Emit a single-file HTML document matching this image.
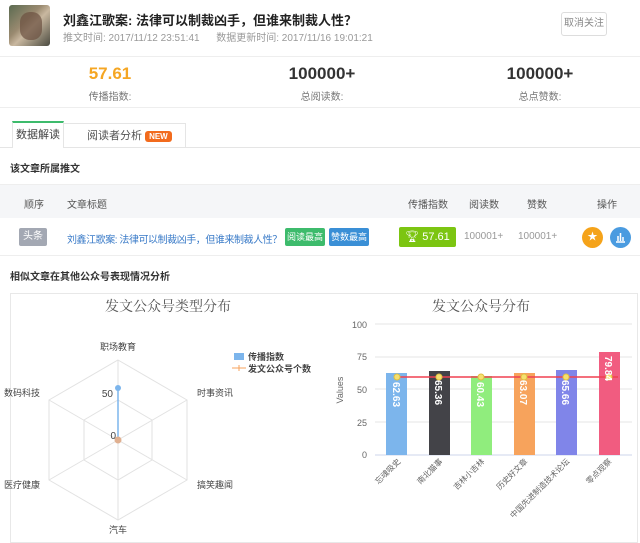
<!DOCTYPE html>
<html><head><meta charset="utf-8"><style>
*{margin:0;padding:0;box-sizing:border-box}
body{width:640px;height:538px;overflow:hidden;background:#fff;font-family:"Liberation Sans","Noto Sans CJK SC",sans-serif;color:#333;position:relative}
.a{position:absolute;white-space:nowrap}
</style></head><body>
<div class="a" style="left:9px;top:5px;width:41px;height:41px;border-radius:3px;background:linear-gradient(135deg,#5a6a50,#9a8a70 40%,#c9b8a0 55%,#4a4a40);"></div>
<div class="a" style="left:20px;top:12px;width:22px;height:28px;border-radius:10px;background:#6b5040;opacity:.7"></div>
<div class="a" style="left:63px;top:10px;font-size:13px;font-weight:bold;color:#222">刘鑫江歌案: 法律可以制裁凶手，但谁来制裁人性？</div>
<div class="a" style="left:63px;top:29px;font-size:10px;color:#999">推文时间: 2017/11/12 23:51:41 &nbsp;&nbsp;&nbsp;&nbsp;&nbsp;数据更新时间: 2017/11/16 19:01:21</div>
<div class="a" style="left:561px;top:12px;width:46px;height:24px;border:1px solid #ddd;border-radius:3px;font-size:10px;color:#888;text-align:center;line-height:22px">取消关注</div>
<div class="a" style="left:0;top:56px;width:640px;height:1px;background:#eee"></div>
<div class="a" style="left:60px;top:64px;width:100px;text-align:center;font-size:17px;font-weight:bold;color:#f5a623">57.61</div>
<div class="a" style="left:60px;top:88px;width:100px;text-align:center;font-size:10px;color:#777">传播指数:</div>
<div class="a" style="left:272px;top:64px;width:100px;text-align:center;font-size:17px;font-weight:bold;color:#333">100000+</div>
<div class="a" style="left:272px;top:88px;width:100px;text-align:center;font-size:10px;color:#777">总阅读数:</div>
<div class="a" style="left:490px;top:64px;width:100px;text-align:center;font-size:17px;font-weight:bold;color:#333">100000+</div>
<div class="a" style="left:490px;top:88px;width:100px;text-align:center;font-size:10px;color:#777">总点赞数:</div>
<div class="a" style="left:0;top:107px;width:640px;height:1px;background:#eee"></div>
<div class="a" style="left:12px;top:121px;width:52px;height:27px;border:1px solid #e5e5e5;border-top:2px solid #3dbb6c;border-bottom:none;background:#fff;font-size:11px;color:#444;text-align:center;line-height:25px;z-index:2">数据解读</div>
<div class="a" style="left:63px;top:123px;width:123px;height:24px;border:1px solid #e5e5e5;border-bottom:none;font-size:11px;color:#555;line-height:24px;padding-left:23px">阅读者分析 <span style="background:#f26b1d;color:#fff;font-size:8px;font-weight:bold;padding:1px 4px;border-radius:3px">NEW</span></div>
<div class="a" style="left:0;top:147px;width:640px;height:1px;background:#e5e5e5"></div>
<div class="a" style="left:10px;top:160px;font-size:10px;font-weight:bold;color:#333">该文章所属推文</div>
<div class="a" style="left:0;top:184px;width:640px;height:34px;background:#f5f6f8;border-top:1px solid #eee"></div>
<div class="a" style="left:24px;top:196px;font-size:10px;color:#555">顺序</div>
<div class="a" style="left:67px;top:196px;font-size:10px;color:#555">文章标题</div>
<div class="a" style="left:408px;top:196px;font-size:10px;color:#555">传播指数</div>
<div class="a" style="left:469px;top:196px;font-size:10px;color:#555">阅读数</div>
<div class="a" style="left:527px;top:196px;font-size:10px;color:#555">赞数</div>
<div class="a" style="left:597px;top:196px;font-size:10px;color:#555">操作</div>
<div class="a" style="left:19px;top:228px;width:28px;height:18px;background:#a3a8b3;border-radius:2px;color:#fff;font-size:10px;text-align:center;line-height:18px">头条</div>
<div class="a" style="left:67px;top:231px;font-size:10px;letter-spacing:-0.45px;color:#3a7bc8">刘鑫江歌案: 法律可以制裁凶手，但谁来制裁人性？</div>
<div class="a" style="left:285px;top:228px;width:40px;height:18px;background:#3dbb6c;border-radius:2px;color:#fff;font-size:9px;text-align:center;line-height:18px">阅读最高</div>
<div class="a" style="left:329px;top:228px;width:40px;height:18px;background:#3a8fd6;border-radius:2px;color:#fff;font-size:9px;text-align:center;line-height:18px">赞数最高</div>
<div class="a" style="left:399px;top:227px;width:57px;height:20px;background:#7cc511;border-radius:2px;color:#fff;font-size:11px;text-align:center;line-height:20px">🏆︎ 57.61</div>
<div class="a" style="left:464px;top:231px;font-size:10px;color:#999">100001+</div>
<div class="a" style="left:518px;top:231px;font-size:10px;color:#999">100001+</div>
<div class="a" style="left:582px;top:227px;width:21px;height:21px;border-radius:50%;background:#f5a31a;color:#fff;font-size:10px;text-align:center;line-height:21px">★</div>
<div class="a" style="left:610px;top:227px;width:21px;height:21px;border-radius:50%;background:#4a9be0"><svg width="21" height="21"><path d="M6 15h9M8 14V9M10.5 14V6M13 14V10" stroke="#fff" stroke-width="1.5" fill="none"/></svg></div>
<div class="a" style="left:0;top:255px;width:640px;height:1px;background:#eee"></div>
<div class="a" style="left:10px;top:268px;font-size:10px;font-weight:bold;color:#333">相似文章在其他公众号表现情况分析</div>
<div class="a" style="left:10px;top:293px;width:628px;height:250px;border:1px solid #e8e8e8"></div>
<svg class="a" style="left:0;top:0" width="640" height="538">
<g font-family="Liberation Serif,Noto Serif CJK SC,serif" fill="#555" font-size="14" text-anchor="middle">
<text x="168" y="311">发文公众号类型分布</text><text x="481" y="311">发文公众号分布</text></g>
<g stroke="#e2e2e2" fill="none">
<polygon points="118,360 187,400 187,480 118,520 49,480 49,400"/>
<polygon points="118,400 152,420 152,460 118,480 84,460 84,420"/>
<path d="M118,440L118,360M118,440L187,400M118,440L187,480M118,440L118,520M118,440L49,480M118,440L49,400"/>
</g>
<line x1="118" y1="440" x2="118" y2="388" stroke="#7cb5ec" stroke-width="1.5"/>
<circle cx="118" cy="388" r="3" fill="#7cb5ec"/><circle cx="118" cy="440" r="3.5" fill="#e0b090"/>
<g font-size="9" fill="#444" font-family="Liberation Sans,Noto Sans CJK SC,sans-serif">
<text x="118" y="350" text-anchor="middle">职场教育</text><text x="197" y="396">时事资讯</text><text x="197" y="488">搞笑趣闻</text>
<text x="118" y="533" text-anchor="middle">汽车</text><text x="40" y="396" text-anchor="end">数码科技</text><text x="40" y="488" text-anchor="end">医疗健康</text>
<text x="113" y="397" text-anchor="end" font-size="10">50</text><text x="116" y="439" text-anchor="end" font-size="10">0</text>
<rect x="234" y="353" width="10" height="7" fill="#7cb5ec"/><text x="248" y="360" font-weight="bold">传播指数</text>
<path d="M232 368h14M239 365v6" stroke="#f7a35c"/><text x="248" y="372" font-weight="bold">发文公众号个数</text>
</g>
<g stroke="#e6e6e6"><path d="M375 324H632M375 357H632M375 389H632M375 422H632"/></g>
<path d="M375 455H632" stroke="#ccd6eb"/>
<g font-size="9" fill="#666" text-anchor="end"><text x="367" y="328">100</text><text x="367" y="360">75</text><text x="367" y="393">50</text><text x="367" y="426">25</text><text x="367" y="458">0</text></g>
<text x="343" y="390" font-size="9" fill="#666" transform="rotate(-90 343 390)" text-anchor="middle">Values</text>
<rect x="386" y="373" width="21" height="82" fill="#7cb5ec"/>
<rect x="429" y="371" width="21" height="84" fill="#434348"/>
<rect x="471" y="376" width="21" height="79" fill="#90ed7d"/>
<rect x="514" y="373" width="21" height="82" fill="#f7a35c"/>
<rect x="556" y="370" width="21" height="85" fill="#8085e9"/>
<rect x="599" y="352" width="21" height="103" fill="#f15c80"/>
<line x1="397" y1="377" x2="618" y2="377" stroke="#f04050" stroke-width="1.5"/>
<g fill="#f5e070" stroke="#e0c040"><circle cx="397" cy="377" r="3"/><circle cx="439" cy="377" r="3"/><circle cx="481" cy="377" r="3"/><circle cx="524" cy="377" r="3"/><circle cx="566" cy="377" r="3"/><circle cx="609" cy="377" r="3"/></g>
<g font-size="10" font-weight="bold" fill="#fff">
<text transform="translate(393,382) rotate(90)">62.63</text><text transform="translate(435,380) rotate(90)">65.36</text>
<text transform="translate(477,382) rotate(90)">60.43</text><text transform="translate(520,380) rotate(90)">63.07</text>
<text transform="translate(562,380) rotate(90)">65.66</text><text transform="translate(605,356) rotate(90)">79.84</text></g>
<g font-size="8" fill="#666" text-anchor="end" font-family="Liberation Sans,Noto Sans CJK SC,sans-serif">
<text transform="translate(401,462) rotate(-45)">忘魂吸史</text><text transform="translate(443,462) rotate(-45)">南北猫事</text>
<text transform="translate(485,462) rotate(-45)">吉林小吉林</text><text transform="translate(528,462) rotate(-45)">历史好文章</text>
<text transform="translate(570,462) rotate(-45)">中国先进制造技术论坛</text><text transform="translate(612,462) rotate(-45)">零点观察</text></g>
</svg>
</body></html>
